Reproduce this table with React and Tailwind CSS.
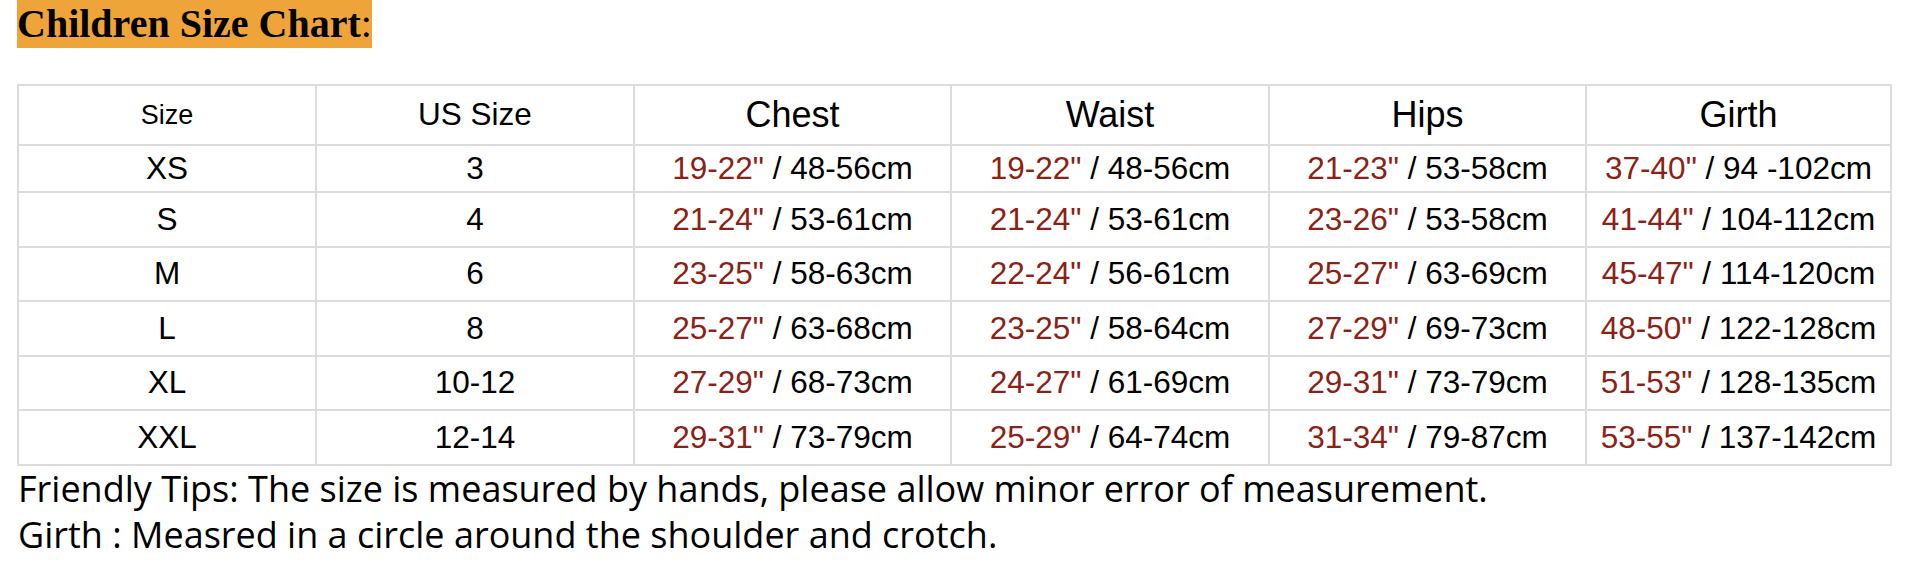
import React from "react";

const rows = [
  ["XS", "3", ["19-22\"", "48-56cm"], ["19-22\"", "48-56cm"], ["21-23\"", "53-58cm"], ["37-40\"", "94 -102cm"], "h-[47px]"],
  ["S", "4", ["21-24\"", "53-61cm"], ["21-24\"", "53-61cm"], ["23-26\"", "53-58cm"], ["41-44\"", "104-112cm"], "h-[55px]"],
  ["M", "6", ["23-25\"", "58-63cm"], ["22-24\"", "56-61cm"], ["25-27\"", "63-69cm"], ["45-47\"", "114-120cm"], "h-[54px]"],
  ["L", "8", ["25-27\"", "63-68cm"], ["23-25\"", "58-64cm"], ["27-29\"", "69-73cm"], ["48-50\"", "122-128cm"], "h-[55px]"],
  ["XL", "10-12", ["27-29\"", "68-73cm"], ["24-27\"", "61-69cm"], ["29-31\"", "73-79cm"], ["51-53\"", "128-135cm"], "h-[54px]"],
  ["XXL", "12-14", ["29-31\"", "73-79cm"], ["25-29\"", "64-74cm"], ["31-34\"", "79-87cm"], ["53-55\"", "137-142cm"], "h-[55px]"],
];

function Measure({ v }) {
  return (
    <td className="border-2 border-[#dcdcdc] text-center align-middle p-0 whitespace-nowrap">
      <span className="text-[#8c2115]">{v[0]}</span>
      <span> / {v[1]}</span>
    </td>
  );
}

export default function App() {
  return (
    <div className="bg-white w-[1914px] h-[562px] overflow-hidden pl-[17px] text-black">
      <div className="h-[48px]">
        <span className="inline-block h-[48px] leading-[48px] bg-[#efa43a] text-[40px] font-['Liberation_Serif',serif]">
          <span className="font-bold">Children Size Chart</span>
          <span>:</span>
        </span>
      </div>
      <table className="mt-[36px] table-fixed border-collapse w-[1873px] font-['Liberation_Sans',Arial,sans-serif] text-[31.5px] leading-none">
        <colgroup>
          <col className="w-[298px]" />
          <col className="w-[318px]" />
          <col className="w-[317px]" />
          <col className="w-[318px]" />
          <col className="w-[317px]" />
          <col className="w-[305px]" />
        </colgroup>
        <thead>
          <tr className="h-[60px]">
            <th className="border-2 border-[#dcdcdc] font-normal text-[27px] p-0">Size</th>
            <th className="border-2 border-[#dcdcdc] font-normal text-[31.5px] p-0">US Size</th>
            <th className="border-2 border-[#dcdcdc] font-normal text-[36px] p-0">Chest</th>
            <th className="border-2 border-[#dcdcdc] font-normal text-[36px] p-0">Waist</th>
            <th className="border-2 border-[#dcdcdc] font-normal text-[36px] p-0">Hips</th>
            <th className="border-2 border-[#dcdcdc] font-normal text-[36px] p-0">Girth</th>
          </tr>
        </thead>
        <tbody>
          {rows.map((r) => (
            <tr key={r[0]} className={r[6]}>
              <td className="border-2 border-[#dcdcdc] text-center align-middle p-0">{r[0]}</td>
              <td className="border-2 border-[#dcdcdc] text-center align-middle p-0">{r[1]}</td>
              <Measure v={r[2]} />
              <Measure v={r[3]} />
              <Measure v={r[4]} />
              <Measure v={r[5]} />
            </tr>
          ))}
        </tbody>
      </table>
      <div className="font-['Open_Sans',sans-serif] text-[36px] leading-[46px] pl-[1px] whitespace-nowrap">
        <p>Friendly Tips: The size is measured by hands, please allow minor error of measurement.</p>
        <p>Girth : Measred in a circle around the shoulder and crotch.</p>
      </div>
    </div>
  );
}
